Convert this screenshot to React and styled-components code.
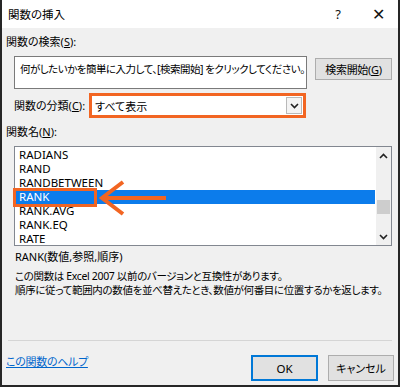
import React from "react";
import styled, { createGlobalStyle } from "styled-components";

const Global = createGlobalStyle`
  html, body { margin: 0; padding: 0; background: #fff; }
  * { box-sizing: border-box; }
`;

const font = `"Noto Sans", "Noto Sans CJK JP", sans-serif`;

const Dialog = styled.div`
  width: 400px;
  height: 387px;
  border: 2px solid #262626;
  border-top: none;
  background: #f0f0f0;
  font-family: ${font};
  font-size: 11px;
  font-feature-settings: "palt";
  color: #000;
  display: flex;
  flex-direction: column;
  overflow: hidden;
`;

const TitleBar = styled.div`
  height: 28px;
  background: #fff;
  display: flex;
  align-items: center;
  padding-left: 6px;
  font-size: 11.5px;
`;

const Title = styled.div`
  flex: 1;
`;

const TitleButton = styled.div`
  width: 40px;
  display: flex;
  justify-content: center;
  font-size: ${(p) => p.$size || 13}px;
  color: #111;
`;

const Body = styled.div`
  flex: 1;
  padding: 0 4px;
  display: flex;
  flex-direction: column;
`;

const Label = styled.div`
  height: 16px;
  line-height: 16px;
  margin-top: ${(p) => p.$top || 0}px;
  white-space: nowrap;
  u { text-decoration: underline; }
`;

const SearchRow = styled.div`
  display: flex;
  align-items: flex-start;
  margin-top: 6px;
  padding-left: 8px;
`;

const SearchBox = styled.div`
  width: 293px;
  height: 33px;
  background: #fff;
  border: 1px solid #7a7a7a;
  padding: 5px 5px;
  line-height: 14px;
  font-size: 10.5px;
  white-space: nowrap;
  overflow: hidden;
  letter-spacing: -0.5px;
`;

const Button = styled.div`
  height: ${(p) => p.$h || 22}px;
  width: ${(p) => p.$w}px;
  margin-left: ${(p) => p.$ml || 0}px;
  margin-top: ${(p) => p.$mt || 0}px;
  background: #e1e1e1;
  border: ${(p) => (p.$default ? "2px solid #0078d7" : "1px solid #adadad")};
  display: flex;
  align-items: center;
  justify-content: center;
  white-space: nowrap;
  font-size: ${(p) => p.$fs || 11}px;
  letter-spacing: ${(p) => p.$ls || 0}px;
  u { text-decoration: underline; }
`;

const CategoryRow = styled.div`
  display: flex;
  align-items: center;
  margin-top: 4px;
  padding-left: 8px;
`;

const Select = styled.div`
  width: 217px;
  height: 25px;
  margin-left: 4px;
  border: 3px solid #f26522;
  background: #fff;
  display: flex;
  align-items: center;
  padding-left: 3px;
`;

const SelectText = styled.div`
  flex: 1;
`;

const DropButton = styled.div`
  width: 16px;
  height: 17px;
  margin-right: 1px;
  border: 1px solid #b9b9b9;
  background: #f4f4f4;
  display: flex;
  align-items: center;
  justify-content: center;
`;

const ListWrap = styled.div`
  position: relative;
  margin: 6px 0 0 8px;
  width: 378px;
  height: 100px;
  border: 1px solid #828790;
  background: #fff;
  display: flex;
`;

const Items = styled.div`
  flex: 1;
  padding: 1px 1px 0 1px;
`;

const Item = styled.div`
  height: 14px;
  line-height: 14px;
  padding-left: 3px;
  font-size: 11.5px;
  background: ${(p) => (p.$selected ? "#0c7ceb" : "transparent")};
  color: ${(p) => (p.$selected ? "#fff" : "#000")};
`;

const ScrollBar = styled.div`
  width: 15px;
  background: #f0f0f0;
  display: flex;
  flex-direction: column;
  align-items: center;
`;

const ScrollArrow = styled.div`
  height: 17px;
  display: flex;
  align-items: center;
  justify-content: center;
`;

const Track = styled.div`
  flex: 1;
  width: 13px;
  display: flex;
  flex-direction: column;
  justify-content: center;
`;

const Thumb = styled.div`
  height: 14px;
  margin-top: 22px;
  background: #cdcdcd;
`;

const Highlight = styled.div`
  position: absolute;
  left: -2px;
  top: 41px;
  width: 84px;
  height: 19px;
  border: 3px solid #f26522;
`;

const Pointer = styled.svg`
  position: absolute;
  left: 80px;
  top: 30px;
`;

const Description = styled.div`
  padding-left: 9px;
  display: flex;
  flex-direction: column;
`;

const Syntax = styled.div`
  margin-top: 3px;
  height: 16px;
  line-height: 16px;
`;

const DescText = styled.div`
  margin-top: 4px;
  line-height: 14px;
  font-size: 10.5px;
  white-space: nowrap;
  letter-spacing: -0.35px;
`;

const Separator = styled.div`
  margin-top: auto;
  height: 1px;
  background: #d5d5d5;
  margin-left: 2px;
  margin-right: 2px;
`;

const Footer = styled.div`
  height: 44px;
  display: flex;
  align-items: flex-start;
  padding-top: 14px;
`;

const HelpLink = styled.a`
  color: #0066cc;
  text-decoration: underline;
  margin-top: -1px;
  flex: 1;
  line-height: 16px;
  letter-spacing: -0.3px;
`;

const Chevron = ({ up }) => (
  <svg width="9" height="6" viewBox="0 0 9 6">
    <path
      d={up ? "M1 5 L4.5 1.5 L8 5" : "M1 1 L4.5 4.5 L8 1"}
      fill="none"
      stroke="#222"
      strokeWidth="1.6"
    />
  </svg>
);

const items = ["RADIANS", "RAND", "RANDBETWEEN", "RANK", "RANK.AVG", "RANK.EQ", "RATE"];

export default function App() {
  return (
    <>
      <Global />
      <Dialog>
        <TitleBar>
          <Title>関数の挿入</Title>
          <TitleButton $size={13}>?</TitleButton>
          <TitleButton $size={16}>✕</TitleButton>
        </TitleBar>
        <Body>
          <Label $top={6}>
            関数の検索(<u>S</u>):
          </Label>
          <SearchRow>
            <SearchBox>
              何がしたいかを簡単に入力して、[検索開始] をクリックしてください。
            </SearchBox>
            <Button $w={77} $ml={8} $mt={2} $ls={-0.3}>
              検索開始(<u>G</u>)
            </Button>
          </SearchRow>
          <CategoryRow>
            <Label>
              関数の分類(<u>C</u>):
            </Label>
            <Select>
              <SelectText>すべて表示</SelectText>
              <DropButton>
                <Chevron />
              </DropButton>
            </Select>
          </CategoryRow>
          <Label $top={6}>
            関数名(<u>N</u>):
          </Label>
          <ListWrap>
            <Items>
              {items.map((it) => (
                <Item key={it} $selected={it === "RANK"}>
                  {it}
                </Item>
              ))}
            </Items>
            <ScrollBar>
              <ScrollArrow>
                <Chevron up />
              </ScrollArrow>
              <Track>
                <Thumb />
              </Track>
              <ScrollArrow>
                <Chevron />
              </ScrollArrow>
            </ScrollBar>
            <Highlight />
            <Pointer width="80" height="44" viewBox="0 0 80 44">
              <path d="M28 5 L7 21 L28 37" fill="none" stroke="#f26522" strokeWidth="4" />
              <path d="M8 21 L71 21" stroke="#f26522" strokeWidth="4" />
            </Pointer>
          </ListWrap>
          <Description>
            <Syntax>RANK(数値,参照,順序)</Syntax>
            <DescText>
              この関数は Excel 2007 以前のバージョンと互換性があります。
              <br />
              順序に従って範囲内の数値を並べ替えたとき、数値が何番目に位置するかを返します。
            </DescText>
          </Description>
          <Separator />
          <Footer>
            <HelpLink href="#">この関数のヘルプ</HelpLink>
            <Button $w={67} $h={26} $fs={11.5} $default>
              OK
            </Button>
            <Button $w={66} $h={26} $ml={10}>
              キャンセル
            </Button>
          </Footer>
        </Body>
      </Dialog>
    </>
  );
}
